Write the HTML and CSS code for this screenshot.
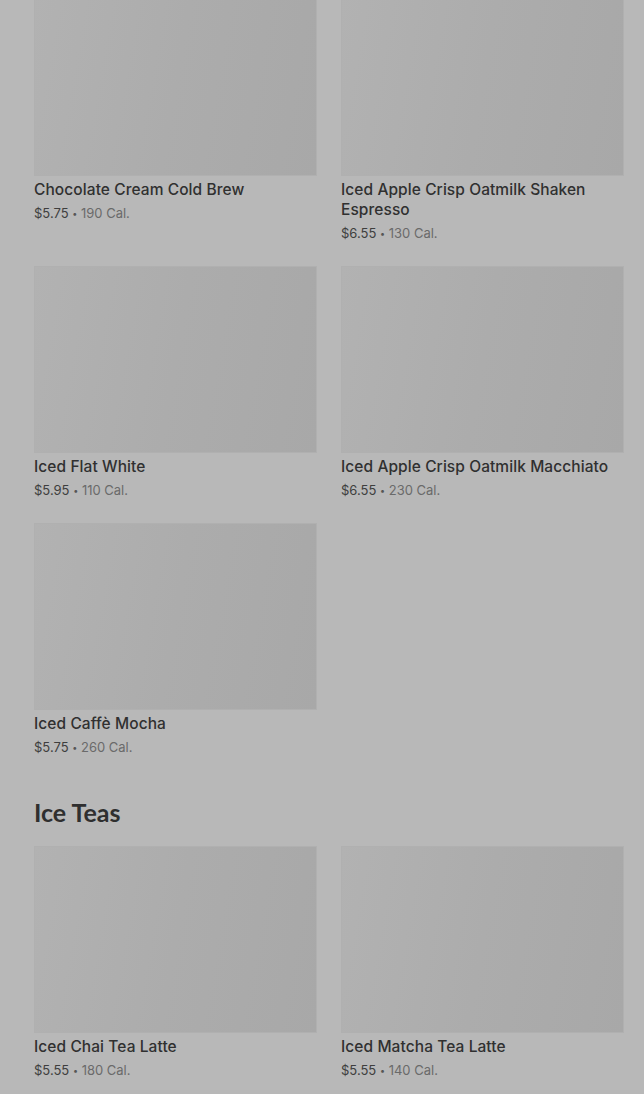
FILE: index.html
```html
<!DOCTYPE html>
<html>
<head>
<meta charset="utf-8">
<link rel="stylesheet" href="styles.css">
</head>
<body>
<div class="page">
  <section class="section first">
    <div class="grid">
      <div class="card">
        <div class="thumb"></div>
        <div class="name">Chocolate Cream Cold Brew</div>
        <div class="meta"><span class="price">$5.75</span> <span class="dot">•</span> <span class="cal">190 Cal.</span></div>
      </div>
      <div class="card">
        <div class="thumb"></div>
        <div class="name">Iced Apple Crisp Oatmilk Shaken Espresso</div>
        <div class="meta"><span class="price">$6.55</span> <span class="dot">•</span> <span class="cal">130 Cal.</span></div>
      </div>
      <div class="card">
        <div class="thumb"></div>
        <div class="name">Iced Flat White</div>
        <div class="meta"><span class="price">$5.95</span> <span class="dot">•</span> <span class="cal">110 Cal.</span></div>
      </div>
      <div class="card">
        <div class="thumb"></div>
        <div class="name">Iced Apple Crisp Oatmilk Macchiato</div>
        <div class="meta"><span class="price">$6.55</span> <span class="dot">•</span> <span class="cal">230 Cal.</span></div>
      </div>
      <div class="card">
        <div class="thumb"></div>
        <div class="name">Iced Caffè Mocha</div>
        <div class="meta"><span class="price">$5.75</span> <span class="dot">•</span> <span class="cal">260 Cal.</span></div>
      </div>
    </div>
  </section>
  <section class="section">
    <h2 class="heading">Ice Teas</h2>
    <div class="grid">
      <div class="card">
        <div class="thumb"></div>
        <div class="name">Iced Chai Tea Latte</div>
        <div class="meta"><span class="price">$5.55</span> <span class="dot">•</span> <span class="cal">180 Cal.</span></div>
      </div>
      <div class="card">
        <div class="thumb"></div>
        <div class="name">Iced Matcha Tea Latte</div>
        <div class="meta"><span class="price">$5.55</span> <span class="dot">•</span> <span class="cal">140 Cal.</span></div>
      </div>
    </div>
  </section>
</div>
</body>
</html>
```

FILE: styles.css
```css
html, body {
  margin: 0;
  padding: 0;
  background: #b8b8b8;
  overflow: hidden;
}
.page {
  padding: 0 20px 0 34px;
  margin-top: -11px;
  font-family: Inter, "Liberation Sans", sans-serif;
}
.section {
  display: block;
}
.grid {
  display: grid;
  grid-template-columns: 1fr 1fr;
  column-gap: 24px;
  row-gap: 23px;
}
.thumb {
  height: 187px;
  background: linear-gradient(100deg, #b2b2b2 0%, #acacac 50%, #a8a8a8 100%);
  box-shadow: inset 0 0 0 1px #b0b0b0;
}
.name {
  margin-top: 4px;
  font-size: 15.5px;
  line-height: 20px;
  font-weight: 500;
  color: #303030;
  letter-spacing: 0.08px;
}
.meta {
  margin-top: 3px;
  font-size: 13px;
  line-height: 20px;
  height: 20px;
  color: #3e3e3e;
}
.dot {
  font-size: 9px;
  line-height: 0;
  color: #555;
  vertical-align: 1px;
}
.cal {
  color: #6a6a6a;
}
.heading {
  margin: 39px 0 18px;
  font-family: Lato, "Open Sans", sans-serif;
  font-weight: 700;
  font-size: 25px;
  line-height: 32px;
  color: #2f2f2f;
}
```
